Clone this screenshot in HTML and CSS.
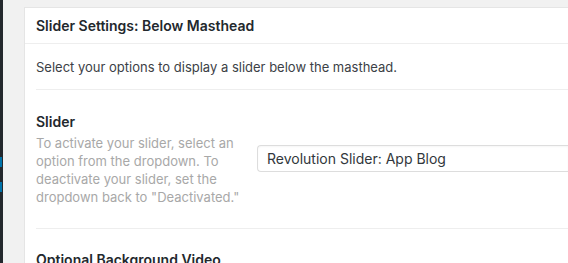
FILE: index.html
```html
<!DOCTYPE html>
<html>
<head>
<meta charset="utf-8">
<link rel="stylesheet" href="styles.css">
</head>
<body>
<div class="adminbar">
  <span class="mark m1"></span>
  <span class="mark m2"></span>
</div>
<div class="wrap">
  <div class="card">
    <div class="card-head">Slider Settings: Below Masthead</div>
    <div class="card-body">
      <p class="intro">Select your options to display a slider below the masthead.</p>
      <div class="row">
        <div class="label-col">
          <div class="label">Slider</div>
          <div class="desc">To activate your slider, select an option from the dropdown. To deactivate your slider, set the dropdown back to "Deactivated."</div>
        </div>
        <div class="field-col">
          <div class="select">Revolution Slider: App Blog</div>
        </div>
      </div>
      <div class="row next">
        <div class="label">Optional Background Video</div>
      </div>
    </div>
  </div>
</div>
</body>
</html>
```
FILE: styles.css
```css
* { box-sizing: border-box; }
html, body { margin: 0; height: 100%; }
body {
  display: flex;
  background: #f1f1f1;
  font-family: Inter, "Open Sans", sans-serif;
  color: #23282d;
  overflow: hidden;
}
.adminbar {
  width: 3px;
  background: #23282d;
  position: relative;
  flex: none;
}
.mark {
  position: absolute;
  left: 0;
  width: 2px;
  background: #0073aa;
}
.m1 { top: 157px; height: 10px; }
.m2 { top: 182px; height: 10px; }
.wrap {
  flex: 1;
  padding: 7px 0 0 21px;
}
.card {
  background: #fff;
  border: 1px solid #e5e5e5;
  border-right: none;
  height: 400px;
}
.card-head {
  font-size: 14px;
  font-weight: 600;
  padding: 9px 11px 8px;
  border-bottom: 1px solid #eee;
  line-height: 18px;
}
.card-body {
  padding: 0 0 0 11px;
}
.intro {
  margin: 0;
  font-size: 13px;
  line-height: 18px;
  padding: 14px 0 13px;
  border-bottom: 1px solid #eee;
  color: #3c4146;
}
.row {
  display: flex;
  border-bottom: 1px solid #eee;
  padding: 23px 0 22px;
}
.row.next { border-bottom: none; padding-top: 22px; }
.label-col { width: 221px; flex: none; }
.label {
  font-size: 14px;
  font-weight: 600;
  line-height: 18px;
  color: #23282d;
}
.desc {
  margin-top: 3px;
  font-size: 13px;
  line-height: 18px;
  color: #a8a8a8;
  width: 214px;
}
.field-col { flex: 1; padding-top: 32px; }
.select {
  height: 27px;
  border: 1px solid #ddd;
  border-right: none;
  border-radius: 4px 0 0 4px;
  padding: 0 9px;
  font-size: 14px;
  line-height: 25px;
  color: #32373c;
  box-shadow: inset 0 1px 2px rgba(0,0,0,.04);
}
```
